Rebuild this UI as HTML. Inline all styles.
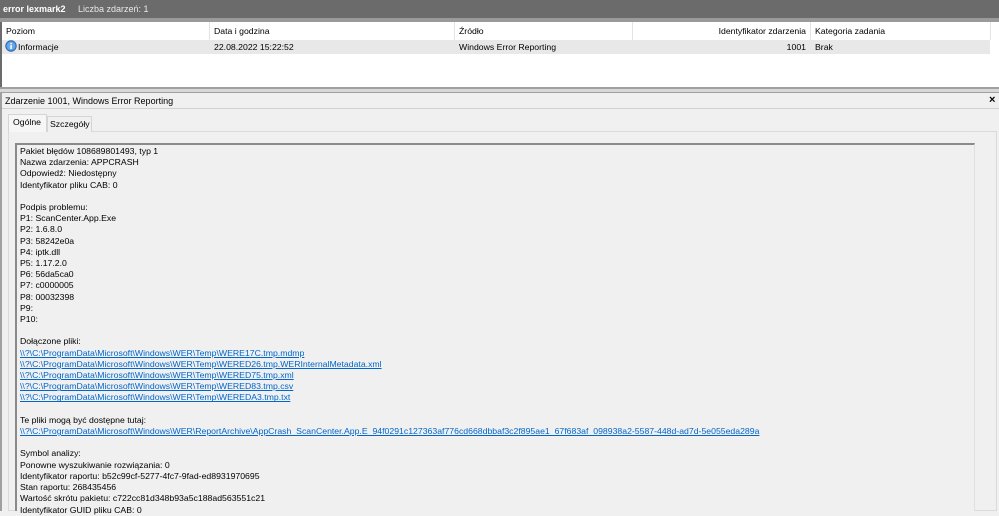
<!DOCTYPE html>
<html><head><meta charset="utf-8"><style>
*{margin:0;padding:0;box-sizing:border-box}
body{width:999px;height:511px;overflow:hidden;background:#f0f0f0;font-family:"Liberation Sans",sans-serif;font-size:8.7px;color:#000;position:relative}
.abs{position:absolute;white-space:nowrap}
a{color:#0066cc;text-decoration:underline}
</style></head><body>
<div class="abs" style="left:0;top:0;width:999px;height:18px;background:#6b6b6b"></div>
<div class="abs" style="left:3px;top:4px;color:#fff;font-weight:bold;font-size:9px">error lexmark2</div>
<div class="abs" style="left:78px;top:4px;color:#e8e8e8;font-size:9px">Liczba zdarzeń: 1</div>
<div class="abs" style="left:0;top:18px;width:999px;height:4px;background:#9a9a9a"></div>
<div class="abs" style="left:0;top:22px;width:999px;height:66px;background:#fff;border-left:2px solid #6b6b6b"></div>
<div class="abs" style="left:209px;top:22px;width:1px;height:18px;background:#e3e3e3"></div>
<div class="abs" style="left:454px;top:22px;width:1px;height:18px;background:#e3e3e3"></div>
<div class="abs" style="left:632px;top:22px;width:1px;height:18px;background:#e3e3e3"></div>
<div class="abs" style="left:810px;top:22px;width:1px;height:18px;background:#e3e3e3"></div>
<div class="abs" style="left:990px;top:22px;width:1px;height:18px;background:#e3e3e3"></div>
<div class="abs" style="left:6px;top:26px">Poziom</div>
<div class="abs" style="left:214px;top:26px">Data i godzina</div>
<div class="abs" style="left:459px;top:26px">Źródło</div>
<div class="abs" style="left:633px;top:26px;width:173px;text-align:right">Identyfikator zdarzenia</div>
<div class="abs" style="left:815px;top:26px">Kategoria zadania</div>
<div class="abs" style="left:2px;top:40px;width:988px;height:14px;background:#e8e8e8"></div>
<svg class="abs" style="left:5px;top:40px" width="12" height="12" viewBox="0 0 12 12"><circle cx="6" cy="6" r="5.3" fill="#4a90d9" stroke="#2a5fa8" stroke-width="0.8"/><circle cx="6" cy="6" r="4" fill="#6aa8e8"/><rect x="5.3" y="5" width="1.5" height="4" fill="#fff"/><rect x="5.3" y="2.8" width="1.5" height="1.4" fill="#fff"/></svg>
<div class="abs" style="left:18px;top:42px">Informacje</div>
<div class="abs" style="left:214px;top:42px">22.08.2022 15:22:52</div>
<div class="abs" style="left:459px;top:42px">Windows Error Reporting</div>
<div class="abs" style="left:633px;top:42px;width:173px;text-align:right">1001</div>
<div class="abs" style="left:815px;top:42px">Brak</div>
<div class="abs" style="left:0;top:87px;width:999px;height:2px;background:#a0a0a0"></div>
<div class="abs" style="left:0;top:89px;width:999px;height:3px;background:#d8d8d8"></div>
<div class="abs" style="left:0;top:92px;width:999px;height:1px;background:#a0a0a0"></div>
<div class="abs" style="left:0;top:93px;width:2px;height:418px;background:#a0a0a0"></div>
<div class="abs" style="left:5px;top:96px;font-size:9px">Zdarzenie 1001, Windows Error Reporting</div>
<div class="abs" style="left:989px;top:94px;font-weight:bold;font-size:11px">×</div>
<div class="abs" style="left:2px;top:108px;width:997px;height:1px;background:#d0d0d0"></div>
<div class="abs" style="left:8px;top:131px;width:989px;height:380px;border:1px solid #dadada;background:#f0f0f0"></div>
<div class="abs" style="left:47px;top:116px;width:45px;height:16px;border:1px solid #d5d5d5;border-bottom:none;background:#f0f0f0"></div>
<div class="abs" style="left:50px;top:119px">Szczegóły</div>
<div class="abs" style="left:8px;top:114px;width:39px;height:18px;border:1px solid #d5d5d5;border-bottom:none;background:#f6f6f6"></div>
<div class="abs" style="left:13px;top:117px">Ogólne</div>
<div class="abs" style="left:15px;top:143px;width:960px;height:368px;border-top:2px solid #8a8a8a;border-left:2px solid #8a8a8a;border-right:1px solid #e0e0e0;background:#f0f0f0"></div>
<div class="abs" style="left:20px;top:146px;line-height:11.2px;font-size:8.7px">
Pakiet błędów 108689801493, typ 1<br>Nazwa zdarzenia: APPCRASH<br>Odpowiedź: Niedostępny<br>Identyfikator pliku CAB: 0<br><br>Podpis problemu:<br>P1: ScanCenter.App.Exe<br>P2: 1.6.8.0<br>P3: 58242e0a<br>P4: iptk.dll<br>P5: 1.17.2.0<br>P6: 56da5ca0<br>P7: c0000005<br>P8: 00032398<br>P9:<br>P10:<br><br>Dołączone pliki:<br>
<a>\\?\C:\ProgramData\Microsoft\Windows\WER\Temp\WERE17C.tmp.mdmp</a><br>
<a>\\?\C:\ProgramData\Microsoft\Windows\WER\Temp\WERED26.tmp.WERInternalMetadata.xml</a><br>
<a>\\?\C:\ProgramData\Microsoft\Windows\WER\Temp\WERED75.tmp.xml</a><br>
<a>\\?\C:\ProgramData\Microsoft\Windows\WER\Temp\WERED83.tmp.csv</a><br>
<a>\\?\C:\ProgramData\Microsoft\Windows\WER\Temp\WEREDA3.tmp.txt</a><br><br>
Te pliki mogą być dostępne tutaj:<br>
<a>\\?\C:\ProgramData\Microsoft\Windows\WER\ReportArchive\AppCrash_ScanCenter.App.E_94f0291c127363af776cd668dbbaf3c2f895ae1_67f683af_098938a2-5587-448d-ad7d-5e055eda289a</a><br><br>
Symbol analizy:<br>Ponowne wyszukiwanie rozwiązania: 0<br>Identyfikator raportu: b52c99cf-5277-4fc7-9fad-ed8931970695<br>Stan raportu: 268435456<br>Wartość skrótu pakietu: c722cc81d348b93a5c188ad563551c21<br>Identyfikator GUID pliku CAB: 0
</div>
</body></html>
